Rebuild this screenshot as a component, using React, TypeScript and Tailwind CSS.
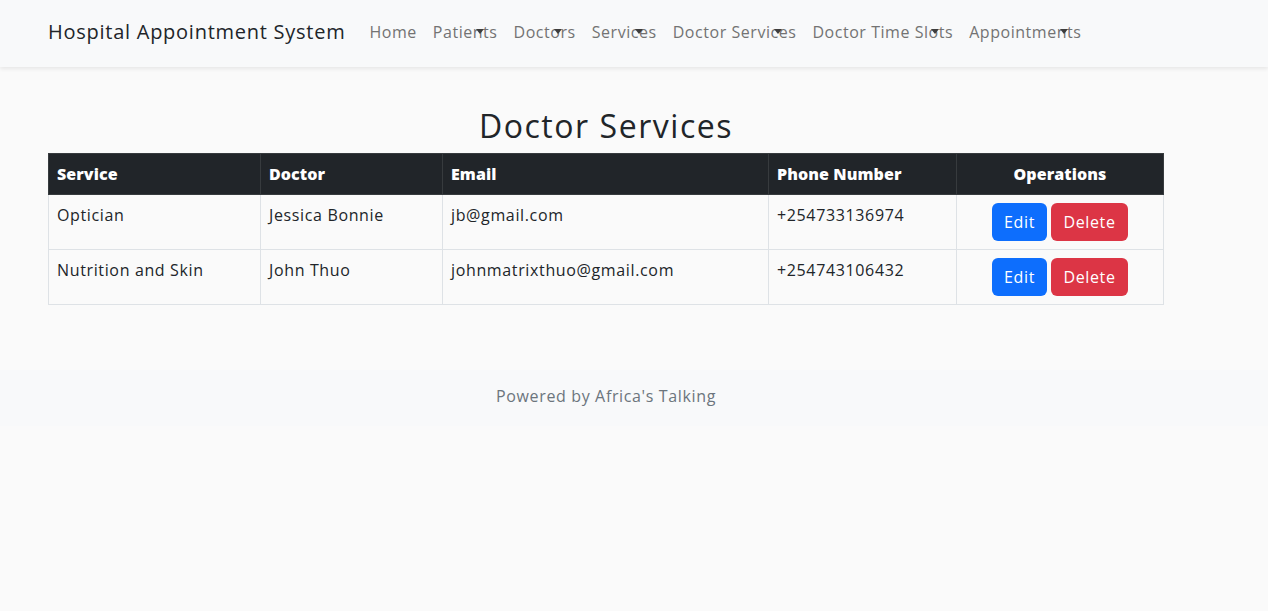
import React from 'react';

const links = [
  { label: 'Home', dropdown: false },
  { label: 'Patients', dropdown: true },
  { label: 'Doctors', dropdown: true },
  { label: 'Services', dropdown: true },
  { label: 'Doctor Services', dropdown: true },
  { label: 'Doctor Time Slots', dropdown: true },
  { label: 'Appointments', dropdown: true },
];

const rows = [
  { service: 'Optician', doctor: 'Jessica Bonnie', email: 'jb@gmail.com', phone: '+254733136974' },
  { service: 'Nutrition and Skin', doctor: 'John Thuo', email: 'johnmatrixthuo@gmail.com', phone: '+254743106432' },
];

// nav link with the odd overlapping caret
const NavLink = ({ label, dropdown }: { label: string; dropdown: boolean }) => (
  <a href="#" className="relative px-2 py-2 text-[16px] leading-6 tracking-[0.034em] text-[#737373]">
    {label}
    {dropdown && (
      <span className="absolute right-[22px] top-[17px] h-0 w-0 border-x-[4px] border-t-[5px] border-x-transparent border-t-[#3d3d3d]" />
    )}
  </a>
);

const Header = () => (
  <header className="bg-[#f8f9fa] shadow-[0_2px_4px_rgba(0,0,0,0.08)]">
    <nav className="flex h-[67px] items-center px-12 pb-[4px]">
      <a href="#" className="mr-4 text-[20px] leading-[30px] tracking-[0.037em] text-[#212529]">
        Hospital Appointment System
      </a>
      <div className="flex items-center">
        {links.map((l) => (
          <NavLink key={l.label} label={l.label} dropdown={l.dropdown} />
        ))}
      </div>
    </nav>
  </header>
);

const thCls = 'border border-[#373b3e] bg-[#212529] px-2 py-2 text-[16px] font-extrabold leading-6 tracking-[0.005em] text-white';

const Td = ({ children }: { children: React.ReactNode }) => (
  <td className="border border-[#dee2e6] px-2 py-2 align-top text-[16px] leading-6 text-[#212529]">{children}</td>
);

export default function App() {
  return (
    <div
      className="min-h-[611px] bg-[#fafafa] tracking-[0.04em]"
      style={{ fontFamily: '"Open Sans", "Liberation Sans", sans-serif' }}
    >
      <Header />
      <main className="ml-12 w-[1116px]">
        <h2 className="mt-10 mb-2 text-center text-[32px] font-medium leading-[38px] tracking-[0.048em] text-[#212529]">
          Doctor Services
        </h2>
        <table className="w-full border-collapse">
          <thead>
            <tr>
              <th className={`w-[212px] text-left ${thCls}`}>Service</th>
              <th className={`w-[182px] text-left ${thCls}`}>Doctor</th>
              <th className={`w-[326px] text-left ${thCls}`}>Email</th>
              <th className={`w-[188px] text-left ${thCls}`}>Phone Number</th>
              <th className={`text-center ${thCls}`}>Operations</th>
            </tr>
          </thead>
          <tbody>
            {rows.map((r) => (
              <tr key={r.email}>
                <Td>{r.service}</Td>
                <Td>{r.doctor}</Td>
                <Td>{r.email}</Td>
                <Td>{r.phone}</Td>
                <td className="border border-[#dee2e6] px-2 py-2">
                  <div className="flex justify-center gap-1">
                    <button className="h-[38px] w-[55px] rounded-[6px] bg-[#0d6efd] text-[16px] text-white">Edit</button>
                    <button className="h-[38px] w-[77px] rounded-[6px] bg-[#dc3545] text-[16px] text-white">Delete</button>
                  </div>
                </td>
              </tr>
            ))}
          </tbody>
        </table>
      </main>
      <footer className="mt-[65px] bg-[#f8f9fa] pt-[14px] pb-[18px]">
        <p className="ml-12 w-[1116px] text-center text-[16px] leading-6 text-[#6c757d]">Powered by Africa's Talking</p>
      </footer>
    </div>
  );
}
